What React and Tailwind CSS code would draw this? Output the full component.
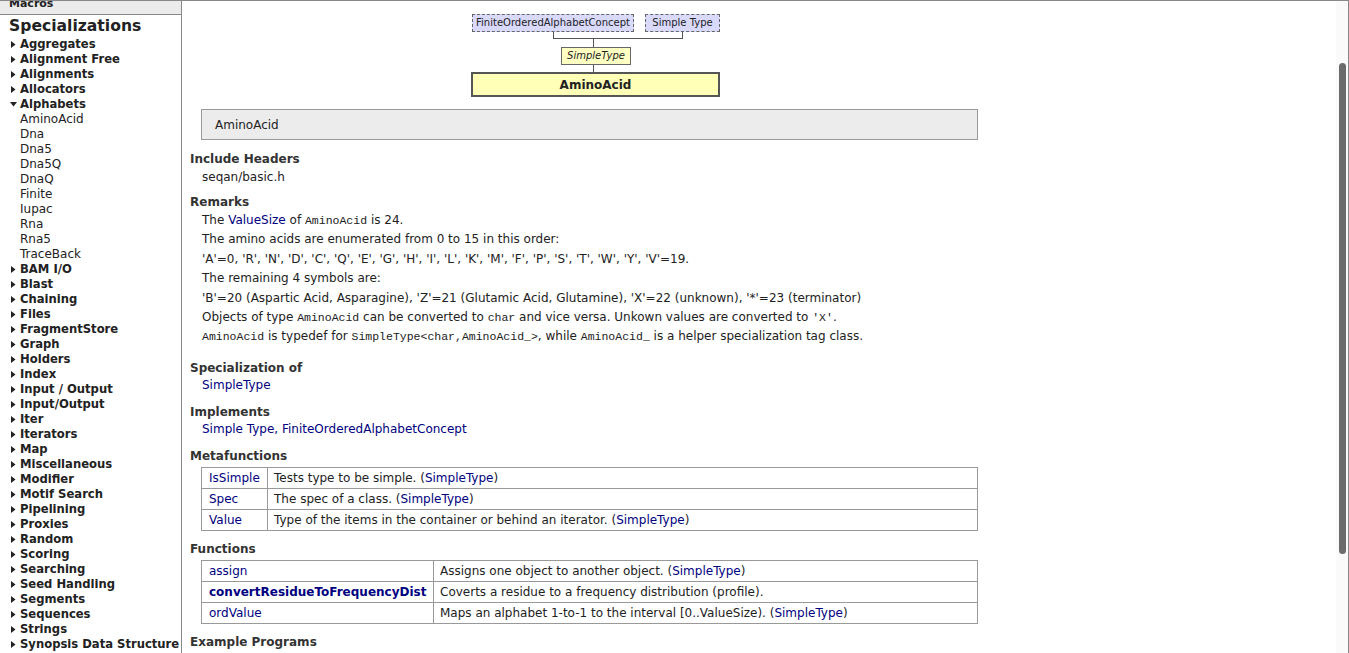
import React from 'react';

const NAV = [
  ['Aggregates', 'closed'],
  ['Alignment Free', 'closed'],
  ['Alignments', 'closed'],
  ['Allocators', 'closed'],
  ['Alphabets', 'open'],
  ['AminoAcid', 'child'],
  ['Dna', 'child'],
  ['Dna5', 'child'],
  ['Dna5Q', 'child'],
  ['DnaQ', 'child'],
  ['Finite', 'child'],
  ['Iupac', 'child'],
  ['Rna', 'child'],
  ['Rna5', 'child'],
  ['TraceBack', 'child'],
  ['BAM I/O', 'closed'],
  ['Blast', 'closed'],
  ['Chaining', 'closed'],
  ['Files', 'closed'],
  ['FragmentStore', 'closed'],
  ['Graph', 'closed'],
  ['Holders', 'closed'],
  ['Index', 'closed'],
  ['Input / Output', 'closed'],
  ['Input/Output', 'closed'],
  ['Iter', 'closed'],
  ['Iterators', 'closed'],
  ['Map', 'closed'],
  ['Miscellaneous', 'closed'],
  ['Modifier', 'closed'],
  ['Motif Search', 'closed'],
  ['Pipelining', 'closed'],
  ['Proxies', 'closed'],
  ['Random', 'closed'],
  ['Scoring', 'closed'],
  ['Searching', 'closed'],
  ['Seed Handling', 'closed'],
  ['Segments', 'closed'],
  ['Sequences', 'closed'],
  ['Strings', 'closed'],
  ['Synopsis Data Structure', 'closed'],
];

const META = [
  ['IsSimple', 'Tests type to be simple.', true],
  ['Spec', 'The spec of a class.', true],
  ['Value', 'Type of the items in the container or behind an iterator.', true],
];

const FUNCS = [
  ['assign', 'Assigns one object to another object.', true, false],
  ['convertResidueToFrequencyDist', 'Coverts a residue to a frequency distribution (profile).', false, true],
  ['ordValue', 'Maps an alphabet 1-to-1 to the interval [0..ValueSize).', true, false],
];

function Arrow({ open }) {
  if (open) {
    return (
      <svg width="7" height="5" viewBox="0 0 7 5" className="ml-[10px] mr-[3px] shrink-0">
        <path d="M0 0 L7 0 L3.5 4.5 Z" fill="#222" />
      </svg>
    );
  }
  return (
    <svg width="5" height="7" viewBox="0 0 5 7" className="ml-[11px] mr-[4px] shrink-0">
      <path d="M0 0 L4.5 3.5 L0 7 Z" fill="#222" />
    </svg>
  );
}

function Link({ children, bold }) {
  return <span className={`text-[#000080] ${bold ? 'font-bold' : ''}`}>{children}</span>;
}

function Code({ children }) {
  return <span className="font-['Liberation_Mono',monospace] text-[11.5px]">{children}</span>;
}

function Heading({ children, className = '' }) {
  return <div className={`h-[16px] leading-[16px] text-[12px] font-bold text-[#333] ${className}`}>{children}</div>;
}

function Line({ children }) {
  return <div className="h-[19.4px] leading-[19.4px] pl-[12px] whitespace-nowrap">{children}</div>;
}

function Diagram() {
  return (
    <div className="relative ml-[281px] w-[249px] h-[96px] text-[10px]">
      <div className="absolute left-[1px] top-[13px] w-[162px] h-[18px] border border-dashed border-[#666] bg-[#d9d9fb] flex items-center justify-center leading-none">
        FiniteOrderedAlphabetConcept
      </div>
      <div className="absolute left-[174px] top-[13px] w-[75px] h-[18px] border border-dashed border-[#666] bg-[#d9d9fb] flex items-center justify-center leading-none">
        Simple Type
      </div>
      <div className="absolute left-[82px] top-[31px] w-px h-[7px] bg-[#555]" />
      <div className="absolute left-[211px] top-[31px] w-px h-[7px] bg-[#555]" />
      <div className="absolute left-[82px] top-[37px] w-[130px] h-px bg-[#555]" />
      <div className="absolute left-[122px] top-[37px] w-px h-[10px] bg-[#555]" />
      <div className="absolute left-[90px] top-[46px] w-[70px] h-[18px] border border-[#666] bg-[#ffffc4] flex items-center justify-center italic leading-none">
        SimpleType
      </div>
      <div className="absolute left-[122px] top-[64px] w-px h-[7px] bg-[#555]" />
      <div className="absolute left-0 top-[71px] w-[249px] h-[25px] border-2 border-[#555] bg-[#ffffb8] flex items-center justify-center font-bold text-[12px] leading-none">
        AminoAcid
      </div>
    </div>
  );
}

function Table({ rows, firstWidth }) {
  return (
    <table className="ml-[11px] w-[777px] border-collapse">
      <tbody>
        {rows.map(([name, desc, suffix, bold]) => (
          <tr key={name}>
            <td style={{ width: firstWidth }} className="border border-[#999] h-[21px] py-0 pl-[7px] pr-[6px] whitespace-nowrap">
              <Link bold={bold}>{name}</Link>
            </td>
            <td className="border border-[#999] h-[21px] py-0 pl-[6px] whitespace-nowrap">
              {desc}
              {suffix && (
                <>
                  {' ('}
                  <Link>SimpleType</Link>
                  {')'}
                </>
              )}
            </td>
          </tr>
        ))}
      </tbody>
    </table>
  );
}

export default function App() {
  return (
    <div className="h-[653px] w-full flex overflow-hidden border-t border-[#888] bg-white text-[#222] font-['DejaVu_Sans',Verdana,sans-serif]">
      {/* navigation frame */}
      <div className="w-[182px] shrink-0 border-r border-[#888] overflow-hidden">
        <div className="h-[14px] bg-[#ebebeb] border-b border-[#888] overflow-hidden">
          <div className="-mt-[3px] pl-[9px] text-[11px] font-bold leading-[12px]">Macros</div>
        </div>
        <div className="h-[22px] pl-[9px] pt-[1px] text-[15.6px] font-bold leading-[21px] whitespace-nowrap">Specializations</div>
        <div className="flex flex-col">
          {NAV.map(([label, type]) => (
            <div key={label} className="h-[15px] flex items-center whitespace-nowrap">
              {type === 'child' ? (
                <span className="pl-[20px] text-[12px] leading-[15px]">{label}</span>
              ) : (
                <>
                  <Arrow open={type === 'open'} />
                  <span className="text-[11.6px] font-bold leading-[15px]">{label}</span>
                </>
              )}
            </div>
          ))}
        </div>
      </div>

      {/* content frame */}
      <div className="flex-1 flex min-w-0">
        <div className="flex-1 min-w-0 pl-[8px] text-[12px] overflow-hidden">
          <Diagram />

          <div className="mt-[12px] ml-[11px] w-[777px] h-[31px] border border-[#999] bg-[#ececec] pl-[13px] flex items-center">
            AminoAcid
          </div>

          <Heading className="mt-[11px]">Include Headers</Heading>
          <div className="h-[20px] leading-[20px] pl-[12px]">seqan/basic.h</div>

          <Heading className="mt-[7px]">Remarks</Heading>
          <div className="pt-[1px]">
            <Line>
              The <Link>ValueSize</Link> of <Code>AminoAcid</Code> is 24.
            </Line>
            <Line>The amino acids are enumerated from 0 to 15 in this order:</Line>
            <Line>'A'=0, 'R', 'N', 'D', 'C', 'Q', 'E', 'G', 'H', 'I', 'L', 'K', 'M', 'F', 'P', 'S', 'T', 'W', 'Y', 'V'=19.</Line>
            <Line>The remaining 4 symbols are:</Line>
            <Line>'B'=20 (Aspartic Acid, Asparagine), 'Z'=21 (Glutamic Acid, Glutamine), 'X'=22 (unknown), '*'=23 (terminator)</Line>
            <Line>
              Objects of type <Code>AminoAcid</Code> can be converted to <Code>char</Code> and vice versa. Unkown values are converted to <Code>'X'</Code>.
            </Line>
            <Line>
              <Code>AminoAcid</Code> is typedef for <Code>SimpleType&lt;char,AminoAcid_&gt;</Code>, while <Code>AminoAcid_</Code> is a helper specialization tag class.
            </Line>
          </div>

          <Heading className="mt-[13px]">Specialization of</Heading>
          <div className="h-[18px] leading-[18px] pl-[12px]">
            <Link>SimpleType</Link>
          </div>

          <Heading className="mt-[10px]">Implements</Heading>
          <div className="h-[18px] leading-[18px] pl-[12px]">
            <Link>Simple Type, FiniteOrderedAlphabetConcept</Link>
          </div>

          <Heading className="mt-[10px]">Metafunctions</Heading>
          <div className="mt-[3px]">
            <Table rows={META} firstWidth={66} />
          </div>

          <Heading className="mt-[10px]">Functions</Heading>
          <div className="mt-[3px]">
            <Table rows={FUNCS} firstWidth={232} />
          </div>

          <Heading className="mt-[10px]">Example Programs</Heading>
        </div>

        {/* scrollbar */}
        <div className="w-[13px] shrink-0 border-r border-[#888] bg-[#fafafa] pt-[62px]">
          <div className="ml-[3px] w-[7px] h-[491px] rounded-full bg-[#6b6b6b]" />
        </div>
      </div>
    </div>
  );
}
